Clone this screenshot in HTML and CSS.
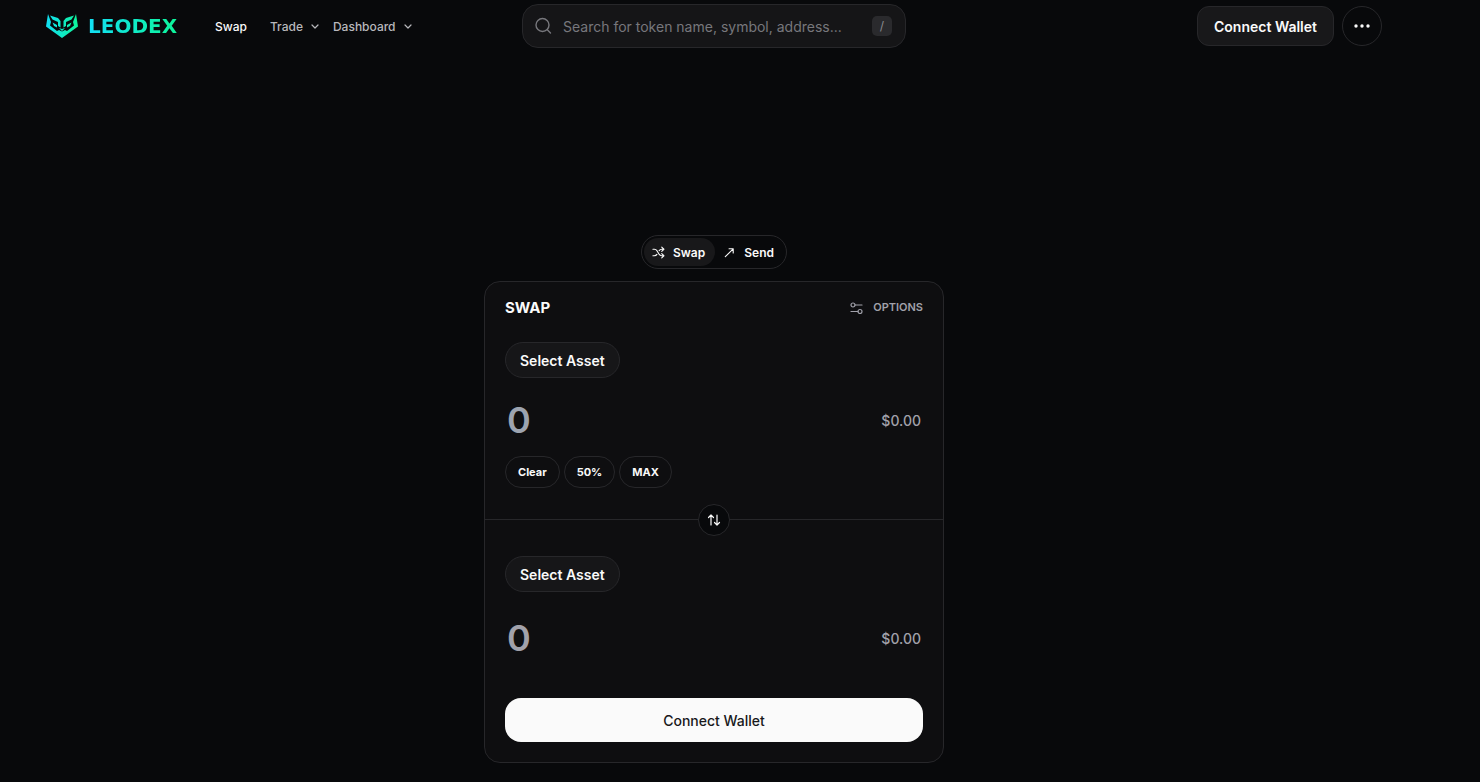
FILE: index.html
```html
<!DOCTYPE html>
<html lang="en">

<head>
    <meta charset="UTF-8" />
    <meta name="viewport" content="width=device-width, initial-scale=1" />
    <title>LeoDex - Swap</title>
    <link rel="stylesheet" href="styles.css">
</head>

<body>

    <header class="header">
        <div class="header-left">
            <a class="logo" href="#">
                <svg width="32" height="24" viewBox="0 0 32 24" aria-hidden="true">
                    <defs>
                        <linearGradient id="leo" x1="0" x2="1" y1="0" y2="0">
                            <stop offset="0" stop-color="#12dff5" />
                            <stop offset="1" stop-color="#0df59a" />
                        </linearGradient>
                    </defs>
                    <path fill="url(#leo)" d="M2 0L0 12.500L16 24L32 12.500L30 0L27 8L28 11.500L21 17L19 16L16 17.500L13 16L11 17L4 11.500L5 8ZM4 1.500L12 4L14.500 7V13.500L12 12V8L6.500 5.500ZM28 1.500L20 4L17.500 7V13.500L20 12V8L25.500 5.500ZM6.500 8.500L11 11V13.500L8 12ZM25.500 8.500L21 11V13.500L24 12ZM13 14L16 15L19 14L16 17Z" />
                </svg>
                <span class="logo-text">LEODEX</span>
            </a>
            <nav class="nav">
                <a class="nav-link active" href="#">Swap</a>
                <button class="nav-link" type="button">Trade
                    <svg width="8" height="8" viewBox="0 0 8 8" aria-hidden="true"><path d="M1 3L4 6L7 3" /></svg>
                </button>
                <button class="nav-link" type="button">Dashboard
                    <svg width="8" height="8" viewBox="0 0 8 8" aria-hidden="true"><path d="M1 3L4 6L7 3" /></svg>
                </button>
            </nav>
        </div>

        <label class="search">
            <svg width="18" height="18" viewBox="0 0 18 18" aria-hidden="true"><circle cx="7.500" cy="8" r="6.500" /><path d="M12.300 12.800L15.500 16" /></svg>
            <input type="text" aria-label="Search tokens" placeholder="Search for token name, symbol, address...">
            <kbd>/</kbd>
        </label>

        <div class="header-right">
            <button class="wallet-button" type="button">Connect Wallet</button>
            <button class="more-button" type="button" aria-label="More">
                <svg width="16" height="4" viewBox="0 0 16 4" aria-hidden="true"><circle cx="2" cy="2" r="1.700" /><circle cx="8" cy="2" r="1.700" /><circle cx="14" cy="2" r="1.700" /></svg>
            </button>
        </div>
    </header>

    <main class="main">
        <div class="tabs">
            <button class="tab active" type="button">
                <svg width="13" height="13" viewBox="0 0 14 14" aria-hidden="true"><path d="M1 3.500H2.500C4 3.500 4.800 4.200 5.500 5.300L7.500 8.700C8.200 9.900 9 10.500 10.500 10.500H12.500M1 10.500H2.500C4 10.500 4.800 9.800 5.300 9M7.700 5C8.400 4 9.200 3.500 10.500 3.500H12.500M10.500 1.300L12.800 3.500L10.500 5.700M10.500 8.300L12.800 10.500L10.500 12.700" /></svg>
                Swap
            </button>
            <button class="tab" type="button">
                <svg width="13" height="13" viewBox="0 0 14 14" aria-hidden="true"><path d="M2.500 11.500L11 3M6.500 3H11V7.500" /></svg>
                Send
            </button>
        </div>

        <section class="card">
            <div class="panel panel-from">
                <div class="card-head">
                    <h1>SWAP</h1>
                    <button class="options" type="button">
                        <svg width="13" height="13" viewBox="0 0 13 13" aria-hidden="true"><circle cx="3" cy="4" r="2" /><path d="M5 4H12M1 10.500H8" /><circle cx="10" cy="10.500" r="2" /></svg>
                        OPTIONS
                    </button>
                </div>
                <button class="asset" type="button">Select Asset</button>
                <div class="amount">
                    <input type="text" inputmode="decimal" aria-label="Amount to swap" placeholder="0">
                    <span class="value">$0.00</span>
                </div>
                <div class="chips">
                    <button type="button">Clear</button>
                    <button type="button">50%</button>
                    <button type="button">MAX</button>
                </div>
            </div>

            <div class="divider">
                <button class="flip" type="button" aria-label="Switch assets">
                    <svg width="14" height="14" viewBox="0 0 14 14" aria-hidden="true"><path d="M4 12V2M1.500 4.500L4 2L6.500 4.500M10 2V12M7.500 9.500L10 12L12.500 9.500" /></svg>
                </button>
            </div>

            <div class="panel panel-to">
                <button class="asset" type="button">Select Asset</button>
                <div class="amount">
                    <input type="text" aria-label="Amount received" placeholder="0" readonly>
                    <span class="value">$0.00</span>
                </div>
                <button class="submit" type="button">Connect Wallet</button>
            </div>
        </section>
    </main>

</body>

</html>
```
FILE: styles.css
```css
* {
    box-sizing: border-box;
}

body {
    margin: 0;
    padding-right: 52px;
    min-height: 100vh;
    background-color: #08090b;
    color: #fafafa;
    font-family: Inter, "Liberation Sans", sans-serif;
    font-size: 14px;
}

button,
input {
    font: inherit;
    color: inherit;
}

button {
    background: none;
    border: none;
    padding: 0;
    cursor: pointer;
}

a {
    color: inherit;
    text-decoration: none;
}

svg {
    flex: none;
}

/* header */
.header {
    display: grid;
    grid-template-columns: 1fr 384px 1fr;
    align-items: center;
    height: 52px;
    padding: 0 46px;
}

.header-left,
.logo,
.nav,
.header-right {
    display: flex;
    align-items: center;
}

.header-left {
    gap: 32px;
}

.logo {
    gap: 10px;
    width: 137px;
}

.logo-text {
    font-family: "DejaVu Sans", sans-serif;
    font-size: 20px;
    font-weight: 700;
    line-height: 24px;
    background: linear-gradient(90deg, #12dff5, #0df59a);
    -webkit-background-clip: text;
    background-clip: text;
    color: transparent;
}

.nav {
    gap: 14px;
}

.nav-link {
    display: flex;
    align-items: center;
    gap: 8px;
    color: #b8b8bc;
    font-size: 12px;
    font-weight: 500;
}

.nav-link.active {
    margin-right: 9px;
    color: #fafafa;
}

.nav-link svg,
.search svg,
.tab svg,
.options svg,
.flip svg {
    fill: none;
    stroke: currentColor;
    stroke-width: 1.2;
    stroke-linecap: round;
    stroke-linejoin: round;
}

.search {
    display: flex;
    align-items: center;
    gap: 10px;
    height: 44px;
    padding: 0 13px 0 12px;
    background-color: #151517;
    border: 1px solid #27272a;
    border-radius: 16px;
    color: #77777c;
}

.search svg {
    stroke-width: 1.4;
}

.search input {
    flex: 1;
    min-width: 0;
    padding: 0;
    background: none;
    border: none;
    outline: none;
    color: #fafafa;
}

.search input::placeholder {
    color: #77777c;
}

.search kbd {
    width: 20px;
    height: 20px;
    background-color: #2a2a2d;
    border-radius: 5px;
    color: #8b8b90;
    font-family: inherit;
    font-size: 12px;
    line-height: 20px;
    text-align: center;
}

.header-right {
    justify-content: flex-end;
    gap: 8px;
}

.wallet-button {
    height: 40px;
    padding: 0 16px;
    background-color: #18181a;
    border: 1px solid #27272a;
    border-radius: 12px;
    font-weight: 600;
}

.more-button {
    display: flex;
    align-items: center;
    justify-content: center;
    width: 40px;
    height: 40px;
    border: 1px solid #27272a;
    border-radius: 50%;
}

.more-button svg {
    fill: currentColor;
}

/* swap */
.main {
    display: flex;
    flex-direction: column;
    align-items: center;
    gap: 12px;
    padding: 183px 16px 19px;
}

.tabs {
    display: flex;
    height: 34px;
    padding: 2px;
    border: 1px solid #27272a;
    border-radius: 17px;
}

.tab {
    display: flex;
    align-items: center;
    gap: 8px;
    padding: 0 10px 0 8px;
    border-radius: 15px;
    font-size: 12px;
    font-weight: 600;
}

.tab.active {
    background-color: #18181a;
}

.card {
    width: 100%;
    max-width: 460px;
    background-color: #0e0e10;
    border: 1px solid #27272a;
    border-radius: 16px;
}

.panel {
    padding: 0 20px;
}

.panel-from {
    padding-top: 12px;
    padding-bottom: 31px;
}

.panel-to {
    padding-top: 36px;
    padding-bottom: 20px;
}

.card-head {
    display: flex;
    align-items: center;
    justify-content: space-between;
    height: 26px;
    margin-bottom: 22px;
}

.card-head h1 {
    margin: 0;
    font-size: 15px;
    font-weight: 700;
}

.options {
    display: flex;
    align-items: center;
    gap: 10px;
    color: #a1a1aa;
    font-size: 11px;
    font-weight: 600;
}

.asset {
    display: block;
    height: 36px;
    padding: 0 14px;
    background-color: #161618;
    border: 1px solid #27272a;
    border-radius: 18px;
    font-weight: 600;
}

.amount {
    display: flex;
    align-items: center;
    height: 44px;
    margin-top: 20px;
    padding: 0 2px;
}

.amount input {
    flex: 1;
    min-width: 0;
    height: 44px;
    padding: 0;
    background: none;
    border: none;
    outline: none;
    font-size: 36px;
    font-weight: 600;
}

.amount input::placeholder {
    color: #9ca3af;
}

.panel-to .amount {
    margin-top: 24px;
}

.panel-to .amount input::placeholder {
    color: #a1a1aa;
}

.value {
    color: #a1a1aa;
    font-weight: 500;
}

.chips {
    display: flex;
    gap: 4px;
    margin-top: 14px;
}

.chips button {
    height: 32px;
    padding: 0 12px;
    border: 1px solid #27272a;
    border-radius: 16px;
    font-size: 11px;
    font-weight: 700;
}

.divider {
    display: flex;
    align-items: center;
    justify-content: center;
    height: 1px;
    background-color: #27272a;
}

.flip {
    display: flex;
    flex: none;
    align-items: center;
    justify-content: center;
    width: 32px;
    height: 32px;
    background-color: #08090b;
    border: 1px solid #27272a;
    border-radius: 50%;
}

.submit {
    display: block;
    width: 100%;
    height: 44px;
    margin-top: 38px;
    background-color: #fafafa;
    border-radius: 16px;
    color: #18181b;
    font-weight: 500;
}
```
